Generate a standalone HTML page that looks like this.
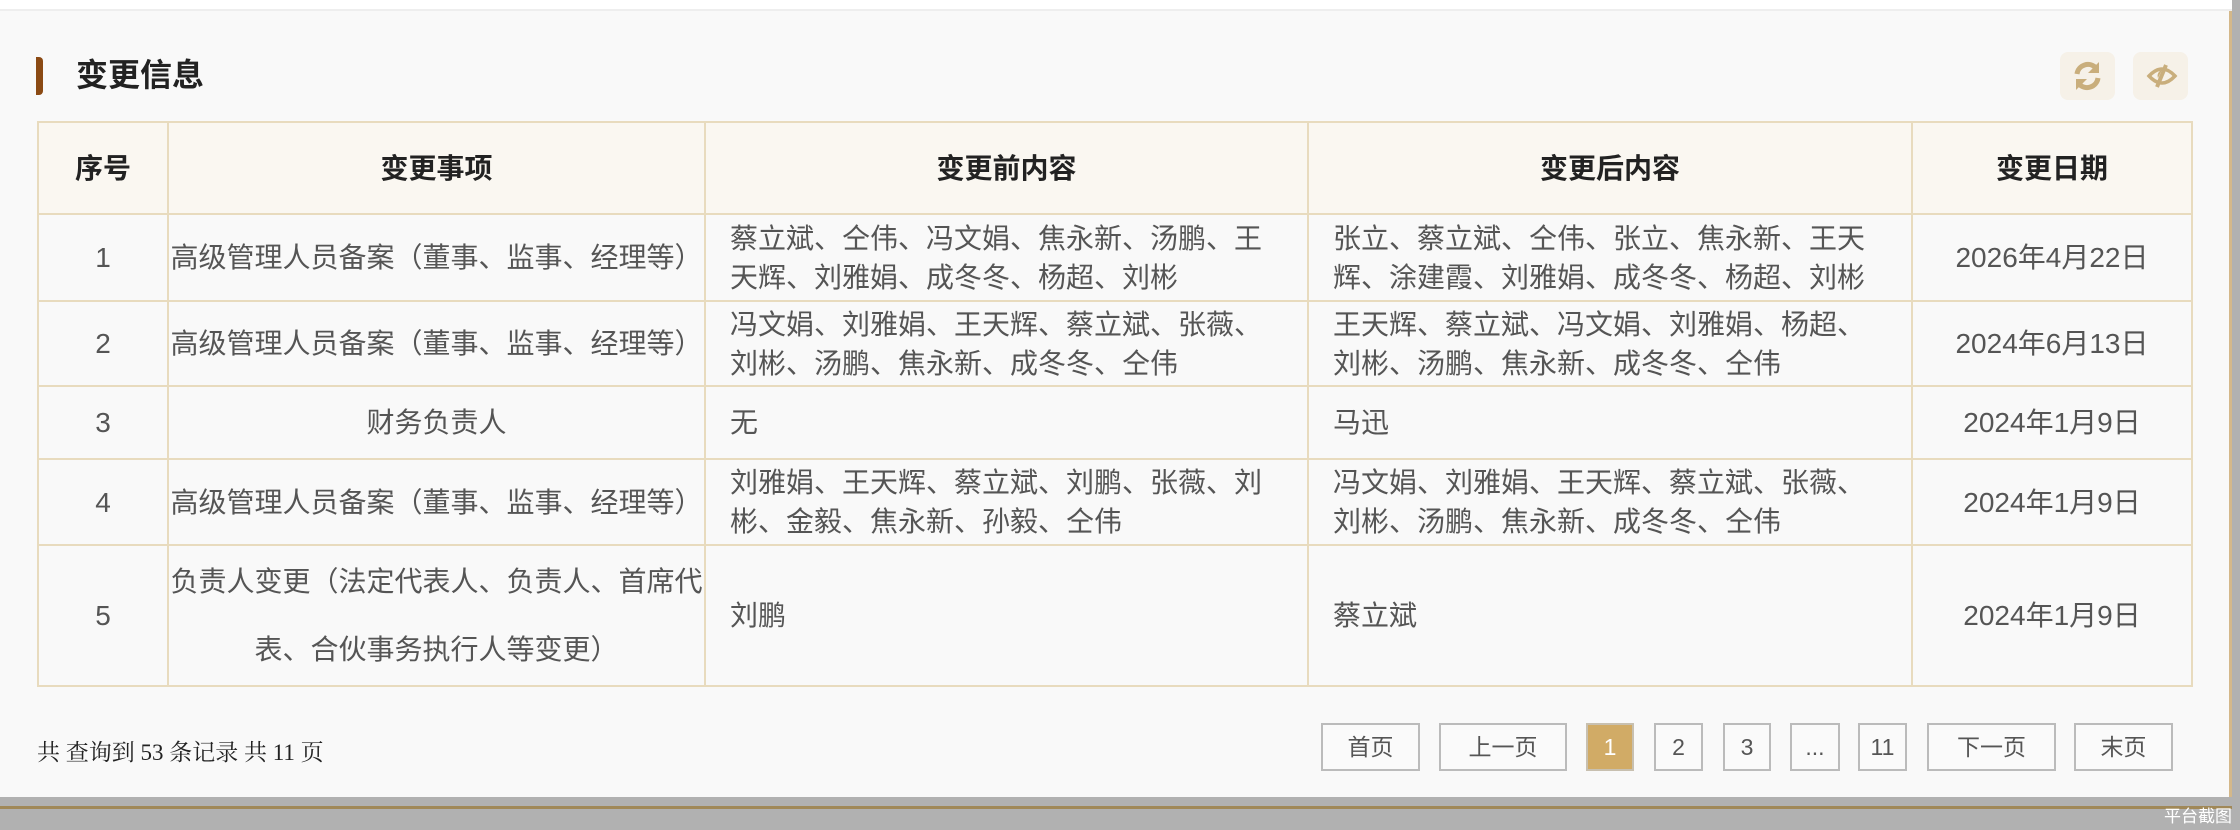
<!DOCTYPE html>
<html><head><meta charset="utf-8"><style>
*{margin:0;padding:0;box-sizing:border-box}
body{width:2240px;height:830px;overflow:hidden;background:#b1b1b1;font-family:"Liberation Sans","Noto Sans CJK SC",sans-serif;position:relative}
.top{position:absolute;left:0;top:0;width:2232px;height:11px;background:#fff;border-bottom:2px solid #eee}
.main{position:absolute;left:0;top:11px;width:2232px;height:786px;background:#f9f9f9;border-right:3px solid #d4b88a}
.bar{position:absolute;left:36px;top:57px;width:7px;height:38px;background:#8b4a14;border-radius:0 4px 4px 0}
.title{position:absolute;left:76px;top:55px;font-size:32px;font-weight:bold;color:#222;line-height:40px}
.ib{position:absolute;top:52px;width:55px;height:48px;background:#f6f1e8;border-radius:8px}
table{position:absolute;left:37px;top:121px;width:2154px;border-collapse:collapse;table-layout:fixed}
td,th{border:2px solid #e8dbbe;font-size:28px;color:#555;line-height:39px;text-align:center;font-weight:normal;overflow:visible;white-space:nowrap}
th{background:#faf7f1;color:#222;font-weight:bold;height:92px}
td.l{text-align:left;padding-left:24px}
.foot{position:absolute;left:37px;top:734px;font-family:"Liberation Serif","Noto Serif CJK SC",serif;font-size:23px;color:#222}
.pg{position:absolute;top:723px;height:48px;border:2px solid #bbb;background:#fafafa;color:#555;font-size:23px;line-height:44px;text-align:center}
.pg.a{background:#d1ab66;color:#fff;border-color:#c8c0b0}
.tan{position:absolute;left:0;top:806px;width:2232px;height:3px;background:#a08858}
.shot{position:absolute;right:8px;top:802px;color:#fff;font-size:17px}
</style></head><body>
<div class="top"></div>
<div class="main"></div>
<div class="bar"></div>
<div class="title">变更信息</div>
<div class="ib" style="left:2060px"><svg width="55" height="48" viewBox="0 0 55 48"><g fill="none" stroke="#c9ae7c" stroke-width="5"><path d="M17 22a11 11 0 0 1 19-6"/><path d="M38 26a11 11 0 0 1-19 6"/></g><path d="M39 10v11h-11z" fill="#c9ae7c"/><path d="M16 38v-11h11z" fill="#c9ae7c"/></svg></div>
<div class="ib" style="left:2133px"><svg width="58" height="48" viewBox="0 0 58 48"><path d="M16 24q13-14 26 0q-13 14-26 0z" fill="none" stroke="#c9ae7c" stroke-width="3.5"/><path d="M33 13l-9 22" stroke="#c9ae7c" stroke-width="4"/><path d="M29 18a6 6 0 0 0-4 8z" fill="#c9ae7c"/></svg></div>
<table>
<colgroup><col style="width:130px"><col style="width:537px"><col style="width:603px"><col style="width:604px"><col style="width:280px"></colgroup>
<tr><th>序号</th><th>变更事项</th><th>变更前内容</th><th>变更后内容</th><th>变更日期</th></tr>
<tr style="height:87px"><td>1</td><td>高级管理人员备案（董事、监事、经理等）</td><td class="l">蔡立斌、仝伟、冯文娟、焦永新、汤鹏、王<br>天辉、刘雅娟、成冬冬、杨超、刘彬</td><td class="l">张立、蔡立斌、仝伟、张立、焦永新、王天<br>辉、涂建霞、刘雅娟、成冬冬、杨超、刘彬</td><td>2026年4月22日</td></tr>
<tr style="height:85px"><td>2</td><td>高级管理人员备案（董事、监事、经理等）</td><td class="l">冯文娟、刘雅娟、王天辉、蔡立斌、张薇、<br>刘彬、汤鹏、焦永新、成冬冬、仝伟</td><td class="l">王天辉、蔡立斌、冯文娟、刘雅娟、杨超、<br>刘彬、汤鹏、焦永新、成冬冬、仝伟</td><td>2024年6月13日</td></tr>
<tr style="height:73px"><td>3</td><td>财务负责人</td><td class="l">无</td><td class="l">马迅</td><td>2024年1月9日</td></tr>
<tr style="height:86px"><td>4</td><td>高级管理人员备案（董事、监事、经理等）</td><td class="l">刘雅娟、王天辉、蔡立斌、刘鹏、张薇、刘<br>彬、金毅、焦永新、孙毅、仝伟</td><td class="l">冯文娟、刘雅娟、王天辉、蔡立斌、张薇、<br>刘彬、汤鹏、焦永新、成冬冬、仝伟</td><td>2024年1月9日</td></tr>
<tr style="height:141px"><td>5</td><td style="line-height:68px">负责人变更（法定代表人、负责人、首席代<br>表、合伙事务执行人等变更）</td><td class="l">刘鹏</td><td class="l">蔡立斌</td><td>2024年1月9日</td></tr>
</table>
<div class="foot">共 查询到 53 条记录 共 11 页</div>
<div class="pg" style="left:1321px;width:99px">首页</div>
<div class="pg" style="left:1439px;width:128px">上一页</div>
<div class="pg a" style="left:1586px;width:48px">1</div>
<div class="pg" style="left:1654px;width:49px">2</div>
<div class="pg" style="left:1723px;width:48px">3</div>
<div class="pg" style="left:1790px;width:50px">...</div>
<div class="pg" style="left:1858px;width:49px">11</div>
<div class="pg" style="left:1927px;width:129px">下一页</div>
<div class="pg" style="left:2074px;width:99px">末页</div>
<div class="tan"></div>
<div class="shot">平台截图</div>
</body></html>
